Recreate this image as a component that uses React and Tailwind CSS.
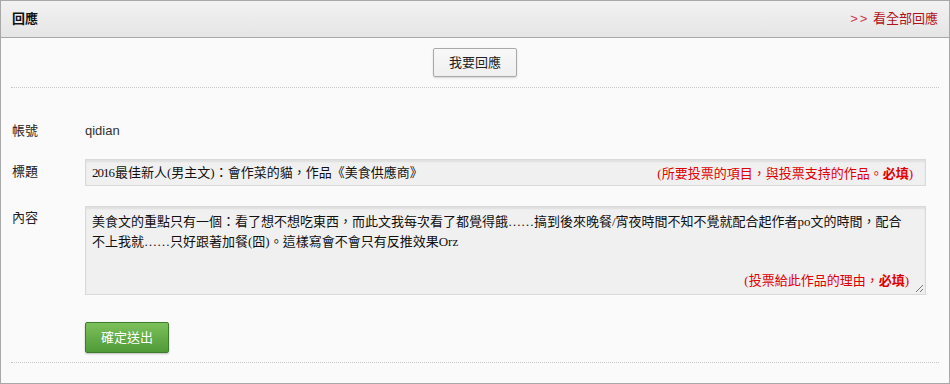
import React from 'react';

const sans = { fontFamily: '"Liberation Sans", "Noto Sans CJK TC", sans-serif' };
const serif = { fontFamily: '"Liberation Serif", "Noto Sans CJK TC", serif' };

const ResizeGrip = () => (
  <svg className="absolute right-[1px] bottom-[1px]" width="9" height="9" viewBox="0 0 9 9">
    <line x1="1" y1="8" x2="8" y2="1" stroke="#777" strokeWidth="1" />
    <line x1="5" y1="8" x2="8" y2="5" stroke="#777" strokeWidth="1" />
  </svg>
);

const App = () => {
  return (
    <div className="w-[950px] h-[384px] bg-white" style={sans}>
      <div className="w-[950px] h-[384px] border border-[#a8a8a8] bg-[#fafafa] flex flex-col">
        {/* Header */}
        <div className="h-[37px] shrink-0 border-b border-[#a8a8a8] bg-linear-to-b from-[#f2f2f2] to-[#e5e5e5] flex items-center justify-between pl-[11px] pr-[11px]">
          <span className="text-[13px] font-bold text-[#111]">回應</span>
          <span className="text-[13px] text-[#b0121b]">
            <span className="text-[#c8384a] tracking-[2px]">&gt;&gt;</span> 看全部回應
          </span>
        </div>

        {/* Reply button */}
        <div className="flex justify-center pt-[10px]">
          <button className="w-[84px] h-[29px] text-[13px] text-[#222] bg-linear-to-b from-[#f8f8f8] to-[#efefef] border border-[#a9a9a9] rounded-[2px] shadow-[0_1px_2px_rgba(0,0,0,0.15)]">
            我要回應
          </button>
        </div>
        <div className="mx-[10px] mt-[10px] border-t border-dotted border-[#c8c8c8]" />

        {/* Form */}
        <div className="flex items-center h-[26px] mt-[30px]">
          <div className="w-[84px] pl-[11px] text-[13px] text-[#222]">帳號</div>
          <div className="text-[13px] text-[#333]">qidian</div>
        </div>

        <div className="flex items-start mt-[15px]">
          <div className="w-[84px] pl-[11px] pt-[3px] text-[13px] text-[#222]">標題</div>
          <div className="relative w-[841px] h-[27px] bg-[#f0f0f0] border border-[#d9d9d9] shadow-[inset_0_2px_2px_rgba(0,0,0,0.07)] flex items-center pl-[6px] text-[13px] text-[#111]" style={serif}>
            <span className="tracking-[-1px] mr-[1px]">2016</span>最佳新人(男主文)：會作菜的貓，作品《美食供應商》
            <span className="absolute right-[12px] top-[4px] text-[13px] text-[#e00000]" style={serif}>
              (所要投票的項目，與投票支持的作品。<b>必填</b>)
            </span>
          </div>
        </div>

        <div className="flex items-start mt-[20px]">
          <div className="w-[84px] pl-[11px] pt-[2px] text-[13px] text-[#222]">內容</div>
          <div className="relative w-[841px] h-[89px] bg-[#f0f0f0] border border-[#d9d9d9] shadow-[inset_0_2px_2px_rgba(0,0,0,0.07)] pl-[6px] pt-[5px] text-[13px] leading-[20px] text-[#111]" style={serif}>
            美食文的重點只有一個：看了想不想吃東西，而此文我每次看了都覺得餓……搞到後來晚餐/宵夜時間不知不覺就配合起作者po文的時間，配合
            <br />
            不上我就……只好跟著加餐(囧)。這樣寫會不會只有反推效果Orz
            <span className="absolute right-[16px] bottom-[3px] text-[13px] text-[#e00000]" style={serif}>
              (投票給此作品的理由，<b>必填</b>)
            </span>
            <ResizeGrip />
          </div>
        </div>

        <div className="pl-[84px] mt-[27px]">
          <button className="w-[84px] h-[31px] text-[13px] text-white bg-linear-to-b from-[#7cc05a] to-[#4f9a38] border border-[#3e7b2c] rounded-[2px] shadow-[0_1px_2px_rgba(0,0,0,0.25)]">
            確定送出
          </button>
        </div>
        <div className="mx-[10px] mt-[9px] border-t border-dotted border-[#c8c8c8]" />
      </div>
    </div>
  );
};

export default App;
